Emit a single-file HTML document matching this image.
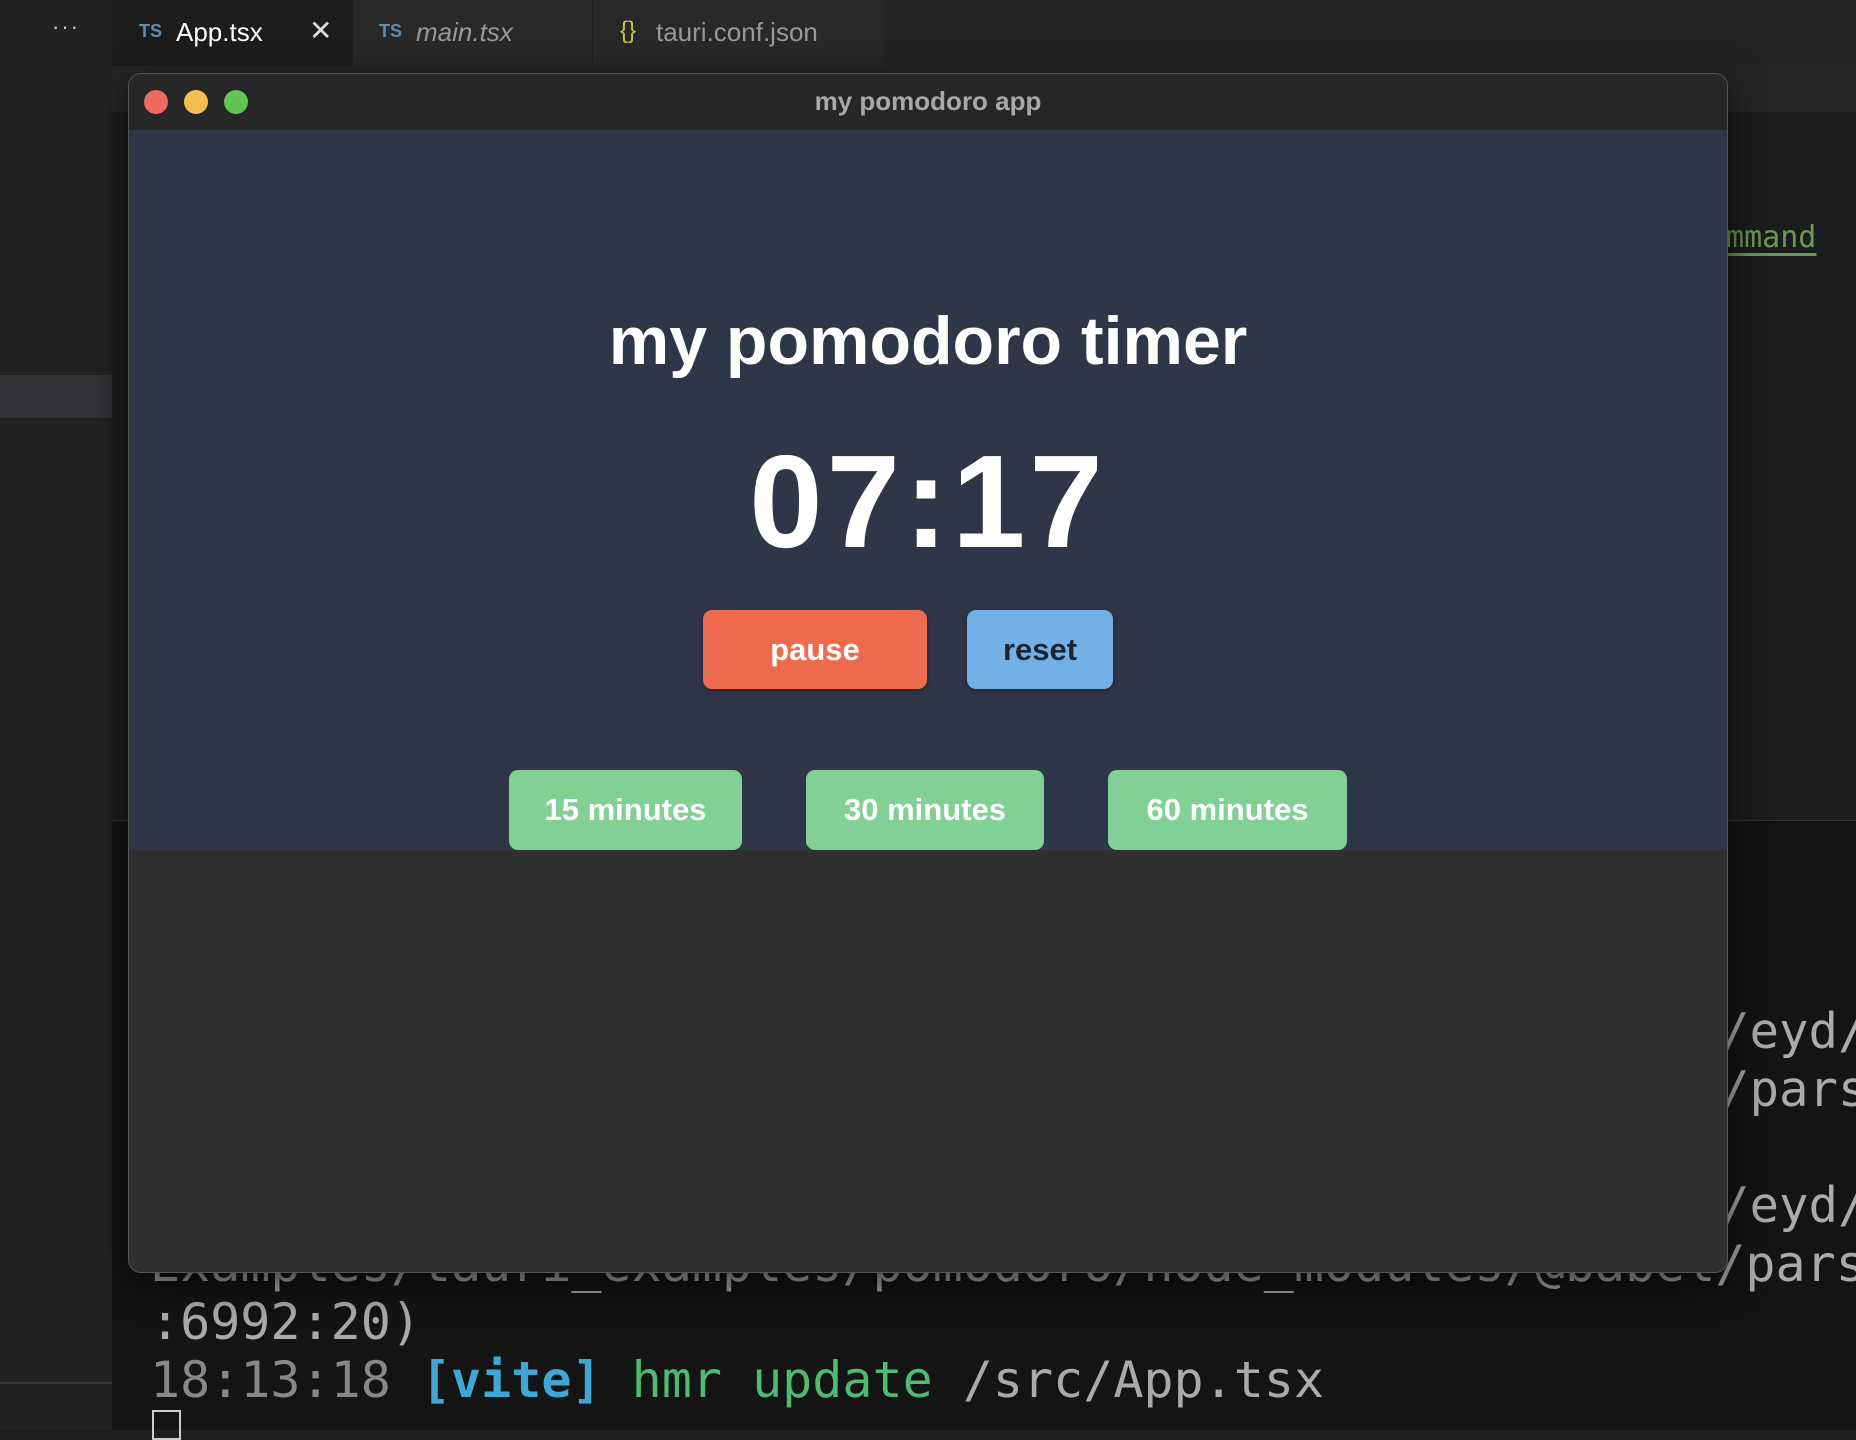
<!DOCTYPE html>
<html><head><meta charset="utf-8"><style>
*{margin:0;padding:0;box-sizing:border-box}
body{width:1856px;height:1430px;overflow:hidden;background:#1e1e1e;position:relative;font-family:"Liberation Sans",sans-serif}
.abs{position:absolute}
.mono{font-family:"DejaVu Sans Mono","Liberation Mono",monospace;white-space:pre}
.btn{position:absolute;border-radius:9px;font-weight:bold;display:flex;align-items:center;justify-content:center;box-shadow:0 2px 4px rgba(0,0,0,.3)}
</style></head><body>
<div class="abs" style="left:0;top:0;width:112px;height:1430px;background:#232323"></div>
<div class="abs" style="left:0;top:375px;width:112px;height:43px;background:#333237"></div>
<div class="abs" style="left:0;top:1382px;width:112px;height:2px;background:#3a3a3a"></div>
<div class="abs" style="left:52px;top:14px;color:#ccc;font-size:22px;letter-spacing:2px">···</div>
<div class="abs" style="left:112px;top:0;width:1744px;height:66px;background:#242424"></div>
<div class="abs" style="left:112px;top:0;width:240px;height:66px;background:#1c1c1c"></div>
<div class="abs" style="left:352px;top:0;width:240px;height:66px;background:#282828;border-left:1px solid #202020"></div>
<div class="abs" style="left:592px;top:0;width:292px;height:66px;background:#282828;border-left:1px solid #202020"></div>
<div class="abs" style="left:139px;top:21px;color:#5a8fb8;font-size:18px;font-weight:bold">TS</div>
<div class="abs" style="left:176px;top:17px;color:#fff;font-size:26px">App.tsx</div>
<div class="abs" style="left:309px;top:14px;color:#ddd;font-size:28px">✕</div>
<div class="abs" style="left:379px;top:21px;color:#5a8fb8;font-size:18px;font-weight:bold">TS</div>
<div class="abs" style="left:416px;top:17px;color:#999;font-size:26px;font-style:italic">main.tsx</div>
<div class="abs" style="left:620px;top:17px;color:#c9c24a;font-size:24px">{}</div>
<div class="abs" style="left:656px;top:17px;color:#999;font-size:26px">tauri.conf.json</div>
<div class="abs" style="left:112px;top:66px;width:1744px;height:46px;background:#262626"></div>
<div class="abs" style="left:112px;top:112px;width:1744px;height:708px;background:#1c1c1c"></div>
<div class="abs mono" style="left:1708px;top:220px;color:#6a9955;font-size:30px;text-decoration:underline;text-decoration-thickness:3px;text-underline-offset:6px">ommand</div>
<div class="abs" style="left:112px;top:820px;width:1744px;height:610px;background:#141414;border-top:1px solid #333"></div>
<div class="abs mono" style="left:1720px;top:1003px;color:#aaa;font-size:49px;line-height:58px">/eyd/
/pars

/eyd/</div>
<div class="abs mono" style="left:150px;top:1235px;color:#aaa;font-size:50px;line-height:58px">Examples/tauri_examples/pomodoro/node_modules/@babel/pars
:6992:20)
<span style="color:#888">18:13:18</span> <span style="color:#3fa7d6;font-weight:bold">[vite]</span> <span style="color:#4fba73">hmr update</span> <span style="color:#aaa">/src/App.tsx</span></div>
<div class="abs" style="left:152px;top:1410px;width:29px;height:30px;border:2px solid #ccc"></div>
<div class="abs" style="left:128px;top:73px;width:1600px;height:1200px;border-radius:13px;background:#2f2f2f;border:1px solid #555;overflow:hidden;box-shadow:0 10px 40px rgba(0,0,0,.7)">
  <div class="abs" style="left:0;top:0;width:100%;height:56px;background:#262626"></div>
  <div class="abs" style="left:15px;top:16px;width:24px;height:24px;border-radius:50%;background:#ed6a5e"></div>
  <div class="abs" style="left:55px;top:16px;width:24px;height:24px;border-radius:50%;background:#f5bf4f"></div>
  <div class="abs" style="left:95px;top:16px;width:24px;height:24px;border-radius:50%;background:#61c554"></div>
  <div class="abs" style="left:0;top:12px;width:100%;text-align:center;color:#a8a8a8;font-weight:bold;font-size:26px">my pomodoro app</div>
  <div class="abs" style="left:0;top:56px;width:100%;height:720px;background:#2f3647"></div>
  <div class="abs" style="left:0;top:228px;width:100%;text-align:center;color:#fff;font-weight:bold;font-size:68px">my pomodoro timer</div>
  <div class="abs" style="left:0;top:362px;width:100%;text-align:center;color:#fff;font-weight:bold;font-size:132px;line-height:1;letter-spacing:4px">07:17</div>
  <div class="btn" style="left:574px;top:536px;width:224px;height:79px;background:#ee6c4d;color:#fff;font-size:31px">pause</div>
  <div class="btn" style="left:838px;top:536px;width:146px;height:79px;background:#73b0e6;color:#1b2533;font-size:31px">reset</div>
  <div class="btn" style="left:380px;top:696px;width:233px;height:80px;background:#82d096;color:#fff;font-size:31px;box-shadow:none">15 minutes</div>
  <div class="btn" style="left:677px;top:696px;width:238px;height:80px;background:#82d096;color:#fff;font-size:31px;box-shadow:none">30 minutes</div>
  <div class="btn" style="left:979px;top:696px;width:239px;height:80px;background:#82d096;color:#fff;font-size:31px;box-shadow:none">60 minutes</div>
</div>
</body></html>
